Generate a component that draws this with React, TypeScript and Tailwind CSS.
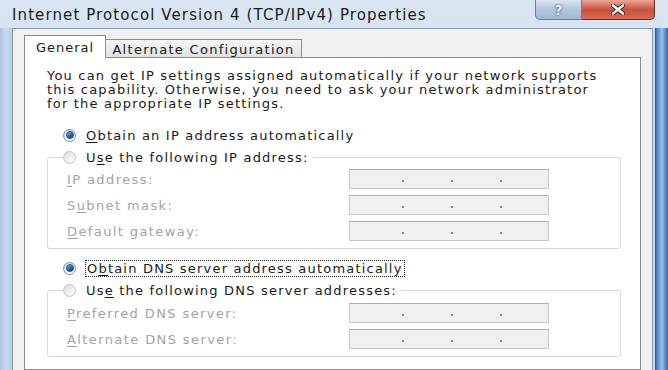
import React from 'react';

const font = "font-['DejaVu_Sans',_'Liberation_Sans',_sans-serif]";

function Radio({ checked, disabled }: { checked?: boolean; disabled?: boolean }) {
  return (
    <span
      className={`flex items-center justify-center w-[13px] h-[13px] rounded-full border shrink-0 ${
        disabled ? 'border-[#c5c5c5]' : 'border-[#8a8f95]'
      } bg-gradient-to-br from-[#dcdcdc] to-[#ffffff]`}
    >
      {checked && (
        <span className="w-[8px] h-[8px] rounded-full bg-gradient-to-br from-[#8ccaf2] via-[#2a6fb0] to-[#0f3e6e] border border-[#1b4d7d]" />
      )}
    </span>
  );
}

function IpBox() {
  return (
    <div className="w-[200px] h-[20px] bg-[#f0f0f0] border border-[#c8c8c8] border-t-[#adadad] flex items-center pl-[52px] gap-[47px] pt-[4px] shrink-0">
      <span className="w-[2px] h-[2px] bg-[#8a8a8a]" />
      <span className="w-[2px] h-[2px] bg-[#8a8a8a]" />
      <span className="w-[2px] h-[2px] bg-[#8a8a8a]" />
    </div>
  );
}

function FieldRow({ pre, key_, post }: { pre?: string; key_: string; post: string }) {
  return (
    <div className="h-[26px] flex items-center pl-[19px]">
      <span className="w-[282px] text-[#a3a3a3] tracking-[1.4px]">
        {pre}
        <span className="underline underline-offset-2">{key_}</span>
        {post}
      </span>
      <IpBox />
    </div>
  );
}

export default function App() {
  return (
    <div className={`w-[668px] h-[370px] overflow-hidden flex flex-col bg-gradient-to-b from-[#dae5f2] to-[#bfd2e9] ${font}`}>
      {/* Title bar */}
      <div className="h-[28px] flex items-start shrink-0">
        <span className="pl-[12px] pt-[4px] text-[15px] text-[#1b1b1b] tracking-[1.1px] whitespace-nowrap">
          Internet Protocol Version 4 (TCP/IPv4) Properties
        </span>
        <div className="flex-1" />
        <div className="flex mr-[13px]">
          <div className="w-[47px] h-[20px] rounded-bl-[5px] border border-t-0 border-[#6b7f99] bg-gradient-to-b from-[#dbe5f1] via-[#b3c6dd] to-[#a0b7d3] flex items-center justify-center">
            <span className="text-white font-bold text-[14px] leading-none [text-shadow:0_0_2px_#2a3c55,0_0_1px_#2a3c55]">?</span>
          </div>
          <div className="w-[73px] h-[20px] rounded-br-[5px] border border-t-0 border-l-0 border-[#6b2a22] bg-gradient-to-b from-[#e9a99a] via-[#c9513f] to-[#d86a52] flex items-center justify-center">
            <svg width="16" height="11" viewBox="0 0 16 11">
              <path d="M3 1.5 L13 9.5 M13 1.5 L3 9.5" stroke="#3a1510" strokeWidth="4.2" strokeLinecap="round" />
              <path d="M3 1.5 L13 9.5 M13 1.5 L3 9.5" stroke="#ffffff" strokeWidth="2.6" strokeLinecap="round" />
            </svg>
          </div>
        </div>
      </div>

      {/* Body */}
      <div className="flex flex-1 min-h-0">
        <div className="w-[12px] bg-gradient-to-r from-[#a9c4e4] via-[#c9dbef] to-[#b6cde8]" />
        <div className="w-[641px] bg-[#f0f0f0] border-l border-t border-r border-[#8497b0] pl-[11px] pr-[11px] pt-[6px] flex flex-col text-[13px] leading-[13px] tracking-[1.2px] whitespace-nowrap">
          {/* Tabs */}
          <div className="flex items-end h-[22px] shrink-0">
            <div className="relative z-10 -mb-px w-[82px] h-[23px] bg-white border border-b-0 border-[#898c95] flex items-center justify-center text-[#1a1a1a] tracking-[1px]">
              General
            </div>
            <div className="w-[196px] h-[18px] border border-l-0 border-b-0 border-[#898c95] bg-gradient-to-b from-[#f5f5f5] to-[#e2e2e2] flex items-center justify-center text-[#1a1a1a] tracking-[1.3px] pt-[1px]">
              Alternate Configuration
            </div>
          </div>

          {/* Panel */}
          <div className="flex-1 bg-white border border-[#898c95] pl-[22px] pr-[19px] pt-[11px] text-[#1a1a1a]">
            <p className="leading-[14px]">
              You can get IP settings assigned automatically if your network supports
              <br />
              this capability. Otherwise, you need to ask your network administrator
              <br />
              for the appropriate IP settings.
            </p>

            <div className="h-[22px] mt-[13px] flex items-center pl-[16px] gap-[10px]">
              <Radio checked />
              <span>
                <span className="underline underline-offset-2">O</span>btain an IP address automatically
              </span>
            </div>

            <fieldset className="border border-[#d5d9dd] rounded-[3px] pb-[4px]">
              <legend className="ml-[15px] pr-[4px] h-[22px] flex items-center gap-[10px]">
                <Radio disabled />
                <span>
                  U<span className="underline underline-offset-2">s</span>e the following IP address:
                </span>
              </legend>
              <div className="-mt-[2px]">
                <FieldRow key_="I" post="P address:" />
                <FieldRow pre="S" key_="u" post="bnet mask:" />
                <FieldRow key_="D" post="efault gateway:" />
              </div>
            </fieldset>

            <div className="h-[22px] mt-[8px] flex items-center pl-[16px] gap-[9px]">
              <Radio checked />
              <span className="border border-dotted border-[#222] px-[1px] py-[1px]">
                O<span className="underline underline-offset-2">b</span>tain DNS server address automatically
              </span>
            </div>

            <fieldset className="border border-[#d5d9dd] rounded-[3px] pb-[4px]">
              <legend className="ml-[15px] pr-[4px] h-[22px] flex items-center gap-[10px]">
                <Radio disabled />
                <span>
                  Us<span className="underline underline-offset-2">e</span> the following DNS server addresses:
                </span>
              </legend>
              <div className="-mt-[1px]">
                <FieldRow key_="P" post="referred DNS server:" />
                <FieldRow key_="A" post="lternate DNS server:" />
              </div>
            </fieldset>
          </div>
        </div>
        <div className="flex-1 flex">
          <div className="w-[2px] bg-[#c9d9ec]" />
          <div className="flex-1 border-l border-[#2f5d97] bg-gradient-to-r from-[#3f78bf] via-[#9cc0e8] to-[#2c65ad]" />
        </div>
      </div>
    </div>
  );
}
